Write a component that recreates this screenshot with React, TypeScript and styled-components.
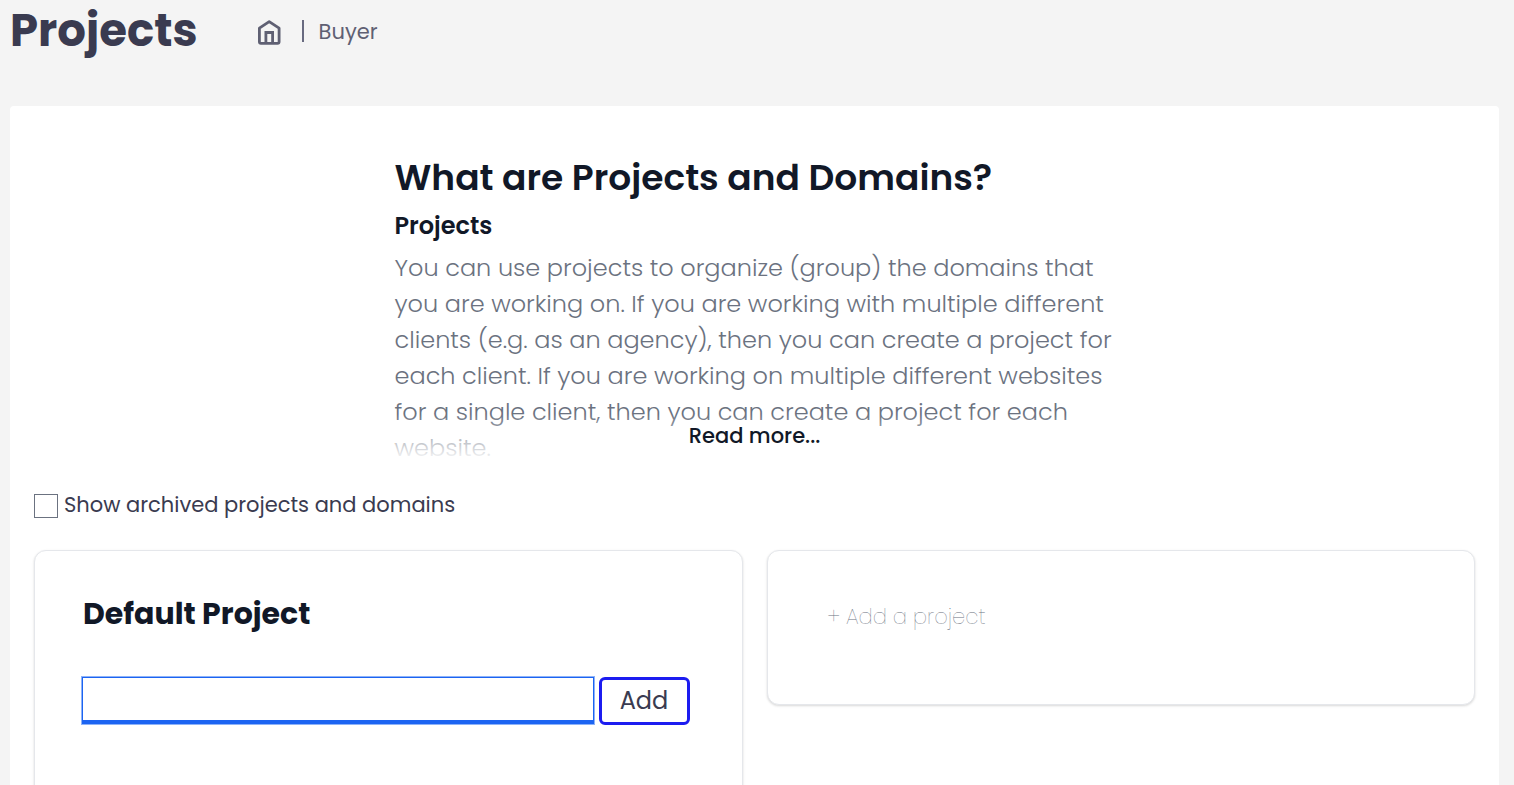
import React, { useState } from "react";
import styled, { createGlobalStyle } from "styled-components";

const GlobalStyle = createGlobalStyle`
  *, *::before, *::after { box-sizing: border-box; }
  body {
    margin: 0;
    background: #f4f4f4;
    color: #3a3b50;
    font-family: Poppins, Inter, "Open Sans", sans-serif;
    font-size: 21px;
  }
  h1, h2, h3, p { margin: 0; }
  button, input { font: inherit; color: inherit; }
`;

const Page = styled.div`
  display: flex;
  flex-direction: column;
  height: 100vh;
  overflow: hidden;
  padding: 0 15px 0 10px;
`;

const Header = styled.header`
  display: flex;
  align-items: flex-start;
  gap: 59px;
  flex: none;
  height: 106px;
`;

const PageTitle = styled.h1`
  font-size: 45px;
  font-weight: 700;
  line-height: 62px;
`;

const Breadcrumb = styled.nav`
  display: flex;
  align-items: center;
  height: 62px;
  color: #5f6073;
  a { display: flex; color: inherit; text-decoration: none; }
`;

const Divider = styled.span`
  width: 2px;
  height: 22px;
  margin: 0 15px 0 20px;
  background: #686a80;
`;

const Panel = styled.main`
  flex: 1;
  padding: 48px 24px 0;
  border-radius: 4px 4px 0 0;
  background: #fff;
`;

const Intro = styled.section`
  position: relative;
  max-width: 720px;
  height: 312px;
  margin: 0 auto;
  color: #111827;
`;

const IntroTitle = styled.h2`
  font-size: 36px;
  font-weight: 600;
  line-height: 48px;
`;

const IntroSubtitle = styled.h3`
  font-size: 24px;
  font-weight: 600;
  line-height: 48px;
`;

const IntroText = styled.p`
  color: #6b7280;
  font-size: 24px;
  font-weight: 300;
  line-height: 36px;
  white-space: nowrap;
`;

const Fade = styled.div`
  position: absolute;
  inset: auto 0 0;
  display: flex;
  justify-content: center;
  align-items: flex-start;
  height: 52px;
  padding-top: 6px;
  background: linear-gradient(to bottom, rgba(255, 255, 255, 0), #fff 48px);
`;

const ReadMore = styled.button`
  padding: 0;
  border: 0;
  background: none;
  font-size: 21px;
  font-weight: 500;
  line-height: 32px;
  cursor: pointer;
`;

const ArchiveToggle = styled.label`
  display: flex;
  align-items: flex-end;
  gap: 6px;
  height: 28px;
  margin-top: 24px;
  line-height: 26px;
`;

const Checkbox = styled.input`
  appearance: none;
  width: 24px;
  height: 24px;
  margin: 0;
  border: 1px solid #6b7280;
  background: #fff;
  &:checked { background: #1c64f2; }
`;

const Cards = styled.div`
  display: grid;
  grid-template-columns: 1fr 1fr;
  align-items: start;
  gap: 24px;
  margin-top: 32px;
`;

const Card = styled.section<{ $minHeight: number }>`
  min-height: ${({ $minHeight }) => $minHeight}px;
  padding: 40px 48px;
  border: 1px solid #e5e7eb;
  border-radius: 12px;
  background: #fff;
  box-shadow: 0 1px 3px rgba(0, 0, 0, 0.1), 0 1px 2px rgba(0, 0, 0, 0.06);
`;

const CardTitle = styled.h2`
  color: #111827;
  font-size: 30px;
  font-weight: 700;
  line-height: 46px;
`;

const DomainForm = styled.form`
  display: flex;
  align-items: flex-start;
  gap: 6px;
  margin-top: 40px;
  padding-right: 4px;
`;

const DomainInput = styled.input`
  flex: 1;
  min-width: 0;
  height: 45px;
  margin: 1px 0;
  padding: 0 12px;
  border: 0 solid #1c64f2;
  border-bottom-width: 3px;
  outline: none;
  box-shadow: 0 0 0 1px #1c64f2, 0 0 0 2px #8db2f8;
`;

const AddButton = styled.button`
  width: 91px;
  height: 48px;
  padding: 0;
  border: 3px solid #1c1cf0;
  border-radius: 6px;
  background: #fff;
  font-size: 24px;
  line-height: 40px;
  cursor: pointer;
`;

const AddProject = styled.button`
  padding: 0 12px;
  border: 0;
  background: none;
  color: #6b7280;
  font-size: 21px;
  font-weight: 200;
  line-height: 52px;
  cursor: pointer;
`;

const HomeIcon = () => (
  <svg width="25" height="28" viewBox="0 0 25 28" fill="none" stroke="currentColor" strokeWidth="2.8" strokeLinejoin="round" aria-hidden="true">
    <path d="M2.4 11.2 12.2 4.7 22.1 11.2V24.7Q22.1 26.3 20.5 26.3H4Q2.4 26.3 2.4 24.7Z" />
    <path d="M8.9 26V15.5H15.6V26" strokeLinejoin="miter" />
  </svg>
);

const introLines = [
  "You can use projects to organize (group) the domains that",
  "you are working on. If you are working with multiple different",
  "clients (e.g. as an agency), then you can create a project for",
  "each client. If you are working on multiple different websites",
  "for a single client, then you can create a project for each",
  "website.",
];

export default function App() {
  const [archived, setArchived] = useState(false);
  const [domain, setDomain] = useState("");

  return (
    <>
      <GlobalStyle />
      <Page>
        <Header>
          <PageTitle>Projects</PageTitle>
          <Breadcrumb aria-label="Breadcrumb">
            <a href="#home" aria-label="Home"><HomeIcon /></a>
            <Divider />
            <a href="#buyer">Buyer</a>
          </Breadcrumb>
        </Header>
        <Panel>
          <Intro>
            <IntroTitle>What are Projects and Domains?</IntroTitle>
            <IntroSubtitle>Projects</IntroSubtitle>
            <IntroText>
              {introLines.map((line) => (
                <React.Fragment key={line}>{line}<br /></React.Fragment>
              ))}
            </IntroText>
            <Fade><ReadMore type="button">Read more...</ReadMore></Fade>
          </Intro>
          <ArchiveToggle>
            <Checkbox type="checkbox" checked={archived} onChange={(e) => setArchived(e.target.checked)} />
            Show archived projects and domains
          </ArchiveToggle>
          <Cards>
            <Card $minHeight={320}>
              <CardTitle>Default Project</CardTitle>
              <DomainForm onSubmit={(e) => e.preventDefault()}>
                <DomainInput type="text" aria-label="Domain" value={domain} onChange={(e) => setDomain(e.target.value)} />
                <AddButton type="submit">Add</AddButton>
              </DomainForm>
            </Card>
            <Card $minHeight={155}>
              <AddProject type="button">+ Add a project</AddProject>
            </Card>
          </Cards>
        </Panel>
      </Page>
    </>
  );
}
